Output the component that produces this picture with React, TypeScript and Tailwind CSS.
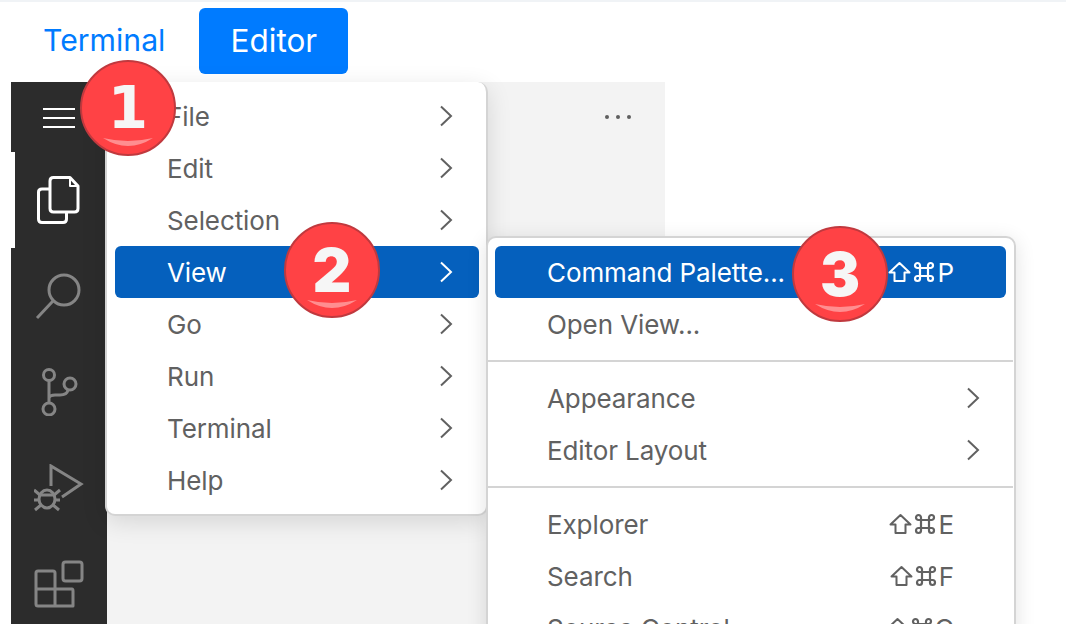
import React from 'react';

const menuItems = ['File', 'Edit', 'Selection', 'View', 'Go', 'Run', 'Terminal', 'Help'];

function Chevron({ className }: { className?: string }) {
  return (
    <svg className={className} width="14" height="22" viewBox="0 0 14 22" fill="none" stroke="currentColor" strokeWidth="2">
      <path d="M2 1.5 L12 11 L2 20.5" />
    </svg>
  );
}

function ShiftCmd({ letter }: { letter: string }) {
  return (
    <span className="flex items-center gap-[2px]">
      <svg width="23" height="22" viewBox="0 0 23 22" fill="none" stroke="currentColor" strokeWidth="2" strokeLinejoin="round">
        <path d="M11.5 2 L21.5 11.5 H16.5 V20 H6.5 V11.5 H1.5 Z" />
      </svg>
      <svg width="22" height="22" viewBox="0 0 22 22" fill="none" stroke="currentColor" strokeWidth="2.2">
        <path d="M7 7 H15 V15 H7 Z M7 7 V4.5 A2.5 2.5 0 1 0 4.5 7 H7 M15 7 H17.5 A2.5 2.5 0 1 0 15 4.5 V7 M15 15 V17.5 A2.5 2.5 0 1 0 17.5 15 H15 M7 15 H4.5 A2.5 2.5 0 1 0 7 17.5 V15" />
      </svg>
      <span>{letter}</span>
    </span>
  );
}

function Badge({ n, font, className }: { n: string; font: string; className: string }) {
  return (
    <div className={`absolute z-20 w-[96px] h-[96px] rounded-full bg-[#ff4245] border-2 border-[#c0393e] flex items-center justify-center overflow-hidden ${className}`}>
      <span className={`text-[#f6f6f6] leading-none ${font}`}>{n}</span>
      <svg className="absolute left-[21px] bottom-[7px]" width="50" height="9" viewBox="0 0 50 9">
        <path d="M0 0 Q25 6 50 0 Q25 16 0 0 Z" fill="#ff8e90" />
      </svg>
    </div>
  );
}

function SubRow({ label, letter, active, arrow }: { label: string; letter?: string; active?: boolean; arrow?: boolean }) {
  return (
    <div className={`h-[52px] shrink-0 flex items-center justify-between pl-[52px] pr-[52px] rounded-[6px] ${active ? 'bg-[#0560bd] text-white' : ''}`}>
      <span>{label}</span>
      {letter && <ShiftCmd letter={letter} />}
      {arrow && <Chevron className="-mr-[26px]" />}
    </div>
  );
}

function Separator() {
  return (
    <div className="h-[22px] -mx-[7px] flex items-center">
      <div className="w-full h-[2px] bg-[#d4d4d4]" />
    </div>
  );
}

export default function App() {
  return (
    <div className="relative w-[1066px] h-[624px] overflow-hidden bg-white font-['Inter',sans-serif]">
      <div className="h-[2px] bg-[#f0f3f6]" />

      {/* tabs */}
      <div className="h-[80px] flex items-start pt-[6px] pl-[43px] gap-[34px]">
        <span className="h-[66px] flex items-center text-[#007bff] text-[30.2px]">Terminal</span>
        <span className="h-[66px] w-[149px] flex items-center justify-center rounded-[6px] bg-[#007bff] text-white text-[31.5px]">Editor</span>
      </div>

      {/* editor */}
      <div className="ml-[11px] w-[654px] h-[542px] flex overflow-hidden">
        <div className="w-[96px] shrink-0 bg-[#2c2c2c] flex flex-col">
          <div className="h-[70px] shrink-0 flex items-center pl-[32px] pt-[1px]">
            <div className="w-[32px] flex flex-col gap-[7px]">
              <div className="h-[2px] bg-white" />
              <div className="h-[2px] bg-white" />
              <div className="h-[2px] bg-white" />
            </div>
          </div>
          <div className="h-[96px] shrink-0 flex items-center pl-[22px] border-l-[4px] border-white">
            <svg width="43" height="48" viewBox="0 0 43 48" fill="none" stroke="white" strokeWidth="3" strokeLinejoin="round">
              <path d="M13 13 H5 Q1.5 13 1.5 16 V43 Q1.5 46.5 5 46.5 H26 Q29.5 46.5 29.5 43 V36" />
              <path d="M13 5 Q13 1.5 16.5 1.5 H33 L41 10 V32.5 Q41 36 37.5 36 H16.5 Q13 36 13 32.5 Z" />
              <path d="M33 3 V10 H40" strokeWidth="2" />
            </svg>
          </div>
          <div className="h-[96px] shrink-0 flex items-center justify-center">
            <svg width="48" height="48" viewBox="0 0 48 48" fill="none" stroke="#858585" strokeWidth="3">
              <circle cx="29" cy="18" r="15" />
              <path d="M18 29 L2 46" />
            </svg>
          </div>
          <div className="h-[96px] shrink-0 flex items-center justify-center">
            <svg width="38" height="48" viewBox="0 0 38 48" fill="none" stroke="#858585" strokeWidth="3">
              <circle cx="9" cy="7" r="5.5" />
              <circle cx="9" cy="41" r="6" />
              <circle cx="30" cy="16" r="6" />
              <path d="M9 13 V35 M9 30 Q10 27 15 27 H20 Q27 27 28 22" />
            </svg>
          </div>
          <div className="h-[96px] shrink-0 flex items-center justify-center">
            <svg width="50" height="48" viewBox="0 0 50 48" fill="none" stroke="#858585" strokeWidth="3">
              <path d="M17 22 V2 L47 20 L28 33" />
              <ellipse cx="13" cy="35" rx="8" ry="9" />
              <path d="M6 31 H20 M0 26 L6 31 M26 26 L20 31 M0 36 H5 M26 36 H21 M1 46 L7 41 M25 46 L19 41" />
            </svg>
          </div>
          <div className="h-[96px] shrink-0 flex items-center justify-center">
            <svg width="50" height="48" viewBox="0 0 50 48" fill="none" stroke="#858585" strokeWidth="3" strokeLinejoin="round">
              <rect x="29" y="2" width="19" height="19" rx="2.5" />
              <path d="M4 11 H19 Q21 11 21 13 V29 H38 Q39 29 39 31 V46 H4 Q2 46 2 44 V13 Q2 11 4 11 Z M2 29 H21 V46" />
            </svg>
          </div>
        </div>
        <div className="flex-1 bg-[#f3f3f3] flex justify-end pr-[34px] pt-[33px]">
          <div className="flex gap-[7px] h-[4px]">
            <div className="w-[4px] h-[4px] rounded-full bg-[#5f5f5f]" />
            <div className="w-[4px] h-[4px] rounded-full bg-[#5f5f5f]" />
            <div className="w-[4px] h-[4px] rounded-full bg-[#5f5f5f]" />
          </div>
        </div>
      </div>

      {/* main menu */}
      <div className="absolute z-10 left-[105px] top-[82px] w-[383px] h-[434px] bg-white rounded-[10px] border-2 border-t-0 border-[#d4d4d4] shadow-[0_6px_24px_rgba(0,0,0,0.12)] pl-[8px] pr-[7px] pt-[8px] text-[26px] tracking-[-0.1px] text-[#616161]">
        {menuItems.map((item) => (
          <div
            key={item}
            className={`h-[52px] flex items-center justify-between pl-[52px] pr-[26px] rounded-[6px] ${item === 'View' ? 'bg-[#0560bd] text-white' : ''}`}
          >
            <span>{item}</span>
            <Chevron />
          </div>
        ))}
      </div>

      {/* view submenu */}
      <div className="absolute z-10 left-[486px] top-[236px] w-[530px] h-[420px] bg-white rounded-[10px] border-2 border-[#d4d4d4] shadow-[0_4px_20px_rgba(0,0,0,0.12)] pl-[7px] pr-[8px] pt-[8px] text-[26px] tracking-[-0.1px] text-[#616161]">
        <SubRow label="Command Palette..." letter="P" active />
        <SubRow label="Open View..." />
        <Separator />
        <SubRow label="Appearance" arrow />
        <SubRow label="Editor Layout" arrow />
        <Separator />
        <SubRow label="Explorer" letter="E" />
        <SubRow label="Search" letter="F" />
        <SubRow label="Source Control" letter="G" />
      </div>

      <Badge n="1" font="font-['DejaVu_Sans',sans-serif] font-bold text-[58px]" className="left-[80px] top-[60px]" />
      <Badge n="2" font="font-['Inter',sans-serif] font-black text-[60px]" className="left-[284px] top-[222px]" />
      <Badge n="3" font="font-['Inter',sans-serif] font-black text-[60px]" className="left-[792px] top-[226px]" />
    </div>
  );
}
